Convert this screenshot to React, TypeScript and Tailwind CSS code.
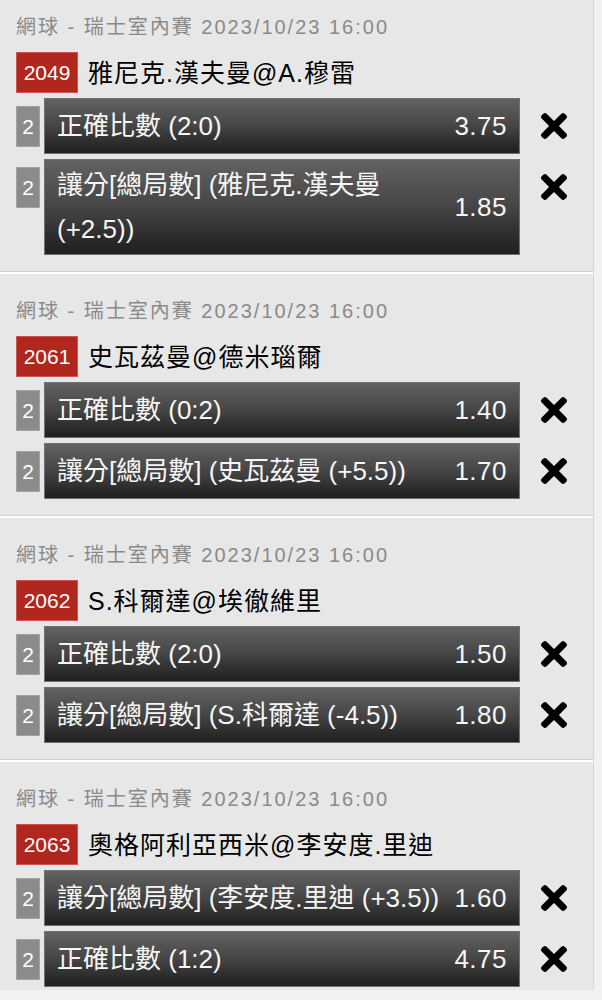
type Bet = { n: number; label: string; odds: string };
type Match = { code: string; title: string; bets: Bet[] };

const matches: Match[] = [
  {
    code: "2049",
    title: "雅尼克.漢夫曼@A.穆雷",
    bets: [
      { n: 2, label: "正確比數 (2:0)", odds: "3.75" },
      { n: 2, label: "讓分[總局數] (雅尼克.漢夫曼 (+2.5))", odds: "1.85" },
    ],
  },
  {
    code: "2061",
    title: "史瓦茲曼@德米瑙爾",
    bets: [
      { n: 2, label: "正確比數 (0:2)", odds: "1.40" },
      { n: 2, label: "讓分[總局數] (史瓦茲曼 (+5.5))", odds: "1.70" },
    ],
  },
  {
    code: "2062",
    title: "S.科爾達@埃徹維里",
    bets: [
      { n: 2, label: "正確比數 (2:0)", odds: "1.50" },
      { n: 2, label: "讓分[總局數] (S.科爾達 (-4.5))", odds: "1.80" },
    ],
  },
  {
    code: "2063",
    title: "奧格阿利亞西米@李安度.里迪",
    bets: [
      { n: 2, label: "讓分[總局數] (李安度.里迪 (+3.5))", odds: "1.60" },
      { n: 2, label: "正確比數 (1:2)", odds: "4.75" },
    ],
  },
];

function CloseIcon() {
  return (
    <svg viewBox="0 80 352 352" className="w-[26px] h-[26px]" fill="#000">
      <path d="M242.72 256l100.07-100.07c12.28-12.28 12.28-32.19 0-44.48l-22.24-22.24c-12.28-12.28-32.19-12.28-44.48 0L176 189.28 75.93 89.21c-12.28-12.28-32.19-12.28-44.48 0L9.21 111.45c-12.28 12.28-12.28 32.19 0 44.48L109.28 256 9.21 356.07c-12.28 12.28-12.28 32.19 0 44.48l22.24 22.24c12.28 12.28 32.2 12.28 44.48 0L176 322.72l100.07 100.07c12.28 12.28 32.2 12.28 44.48 0l22.24-22.24c12.28-12.28 12.28-32.19 0-44.48L242.72 256z" />
    </svg>
  );
}

function BetRow({ bet }: { bet: Bet }) {
  return (
    <div className="flex items-start">
      <div className="h-[56px] flex items-center">
        <div className="w-[24px] h-[41px] bg-[#8b8b8b] border border-[#a3a3a3] flex items-center justify-center text-white text-[21px] leading-none">
          {bet.n}
        </div>
      </div>
      <div className="ml-[4px] w-[476px] min-h-[56px] flex items-center bg-gradient-to-b from-[#626262] via-[#454545] to-[#1f1f1f] border border-[#707070] px-[12px] py-[3px] text-[#f6f6f6] text-[26px] leading-[44px]">
        <div className="flex-1 min-w-0">{bet.label}</div>
        <div className="shrink-0 ml-[8px] tracking-[0.5px]">{bet.odds}</div>
      </div>
      <div className="h-[56px] flex items-center ml-[21px]">
        <CloseIcon />
      </div>
    </div>
  );
}

function MatchGroup({ m, first }: { m: Match; first: boolean }) {
  return (
    <div className={first ? "-mt-[10px]" : ""}>
      <div className="pl-[16px] pt-[25px] pb-[16px]">
        <div className="text-[20px] leading-[24px] tracking-[2px] text-[#8a8a8a] whitespace-nowrap">
          網球 - 瑞士室內賽 2023/10/23 16:00
        </div>
        <div className="mt-[13px] flex items-center">
          <div className="w-[62px] h-[41px] bg-[#b1261d] border border-[#c9574f] flex items-center justify-center text-white text-[21px] leading-none">
            {m.code}
          </div>
          <div className="ml-[10px] text-[25px] leading-[30px] tracking-[1px] text-black whitespace-nowrap">
            {m.title}
          </div>
        </div>
        <div className="mt-[5px] flex flex-col gap-[5px]">
          {m.bets.map((b, i) => (
            <BetRow key={i} bet={b} />
          ))}
        </div>
      </div>
      <div className="h-px bg-[#d2d2d2]" />
      <div className="h-[2px] bg-white" />
    </div>
  );
}

export default function App() {
  return (
    <div
      className="h-[1000px] overflow-hidden bg-[#f1f1f1]"
      style={{ fontFamily: '"Liberation Sans", "Noto Sans CJK TC", sans-serif' }}
    >
      <div className="w-[594px] h-full bg-[#e7e7e8] border-r border-[#d6d6d6]">
        {matches.map((m, i) => (
          <MatchGroup key={m.code} m={m} first={i === 0} />
        ))}
      </div>
    </div>
  );
}
